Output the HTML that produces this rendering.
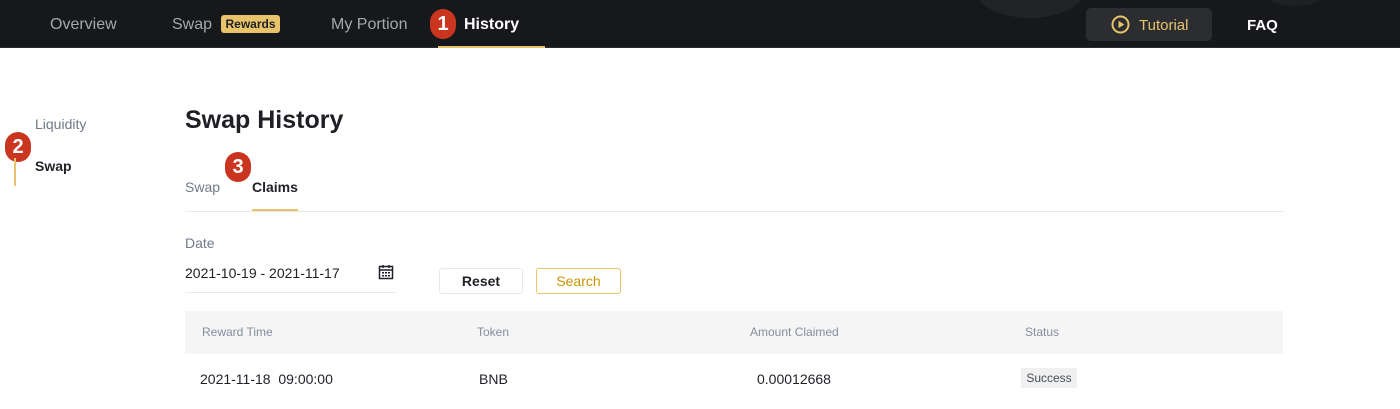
<!DOCTYPE html>
<html><head><meta charset="utf-8"><style>
*{margin:0;padding:0;box-sizing:border-box}
body{width:1400px;height:409px;background:#fff;font-family:"Liberation Sans",sans-serif;position:relative;overflow:hidden;color:#1e2026}
.a{position:absolute;white-space:nowrap}
.hdr{position:absolute;left:0;top:0;width:1400px;height:48px;background:#17181b;border-bottom:1px solid #2a2b2f}
.nav{font-size:16px;color:#a5a8ad;top:16px}
.badge{position:absolute;width:26px;height:30px;border-radius:13px;background:#c9351f;color:#fff;font-size:20px;font-weight:bold;text-align:center;line-height:30px}
</style></head><body>
<div class="hdr">
<div style="position:absolute;left:975px;top:-40px;width:110px;height:58px;border-radius:50%;background:#222326"></div>
<div style="position:absolute;left:1260px;top:-30px;width:70px;height:36px;border-radius:50%;background:#1f2023"></div>
<div class="a nav" style="left:50px">Overview</div>
<div class="a nav" style="left:172px">Swap</div>
<div class="a" style="left:221px;top:15px;width:59px;height:18px;background:#e8c36a;border-radius:3px;color:#1e2026;font-size:12px;font-weight:bold;text-align:center;line-height:18px">Rewards</div>
<div class="a nav" style="left:331px">My Portion</div>
<div class="badge" style="left:430px;top:9px">1</div>
<div class="a nav" style="left:464px;color:#fff;font-weight:bold">History</div>
<div class="a" style="left:438px;top:46px;width:107px;height:2px;background:#e8c36a"></div>
<div class="a" style="left:1086px;top:8px;width:126px;height:33px;background:#2b2d31;border-radius:5px"></div>
<svg class="a" style="left:1111px;top:15px" width="19" height="19" viewBox="0 0 19 19"><circle cx="9.5" cy="9.5" r="8" fill="none" stroke="#e8c36a" stroke-width="2"/><path d="M7.5 5.8v7.4l5.8-3.7z" fill="#e8c36a"/></svg>
<div class="a" style="left:1139px;top:17px;font-size:15px;color:#e8c36a">Tutorial</div>
<div class="a" style="left:1247px;top:17px;font-size:15px;color:#fff;font-weight:bold">FAQ</div>
</div>
<div class="a" style="left:35px;top:116px;font-size:14px;color:#707a8a">Liquidity</div>
<div class="badge" style="left:5px;top:132px">2</div>
<div class="a" style="left:14px;top:158px;width:2px;height:28px;background:#e8c36a"></div>
<div class="a" style="left:35px;top:158px;font-size:14px;color:#1e2026;font-weight:bold">Swap</div>
<div class="a" style="left:185px;top:106px;font-size:25px;font-weight:bold">Swap History</div>
<div class="a" style="left:185px;top:179px;font-size:14px;color:#707a8a">Swap</div>
<div class="badge" style="left:225px;top:152px">3</div>
<div class="a" style="left:252px;top:179px;font-size:14px;font-weight:bold">Claims</div>
<div class="a" style="left:252px;top:209px;width:46px;height:2px;background:#e8c36a"></div>
<div class="a" style="left:185px;top:211px;width:1098px;height:1px;background:#e6e8ea"></div>
<div class="a" style="left:185px;top:235px;font-size:14px;color:#707a8a">Date</div>
<div class="a" style="left:185px;top:265px;font-size:14px">2021-10-19 - 2021-11-17</div>
<svg class="a" style="left:378px;top:264px" width="16" height="16" viewBox="0 0 16 16"><rect x="1.5" y="2.5" width="13" height="12" fill="none" stroke="#1e2026" stroke-width="1.5"/><path d="M1.5 6h13M5 1v3M11 1v3" stroke="#1e2026" stroke-width="1.5"/><path d="M4 8h2v1.5H4zM7 8h2v1.5H7zM10 8h2v1.5h-2zM4 11h2v1.5H4zM7 11h2v1.5H7zM10 11h2v1.5h-2z" fill="#1e2026"/></svg>
<div class="a" style="left:185px;top:292px;width:211px;height:1px;background:#e6e8ea"></div>
<div class="a" style="left:439px;top:268px;width:84px;height:26px;border:1px solid #e6e8ea;border-radius:3px;font-size:14px;font-weight:bold;text-align:center;line-height:24px">Reset</div>
<div class="a" style="left:536px;top:268px;width:85px;height:26px;border:1px solid #e8c36a;border-radius:3px;font-size:14px;color:#c99400;text-align:center;line-height:24px">Search</div>
<div class="a" style="left:185px;top:311px;width:1098px;height:43px;background:#f5f5f5"></div>
<div class="a" style="left:202px;top:325px;font-size:12px;color:#848e9c">Reward Time</div>
<div class="a" style="left:477px;top:325px;font-size:12px;color:#848e9c">Token</div>
<div class="a" style="left:750px;top:325px;font-size:12px;color:#848e9c">Amount Claimed</div>
<div class="a" style="left:1025px;top:325px;font-size:12px;color:#848e9c">Status</div>
<div class="a" style="left:200px;top:371px;font-size:14px">2021-11-18&nbsp; 09:00:00</div>
<div class="a" style="left:479px;top:371px;font-size:14px">BNB</div>
<div class="a" style="left:757px;top:371px;font-size:14px">0.00012668</div>
<div class="a" style="left:1021px;top:368px;width:56px;height:20px;background:#f0f0f0;font-size:12px;color:#474d57;text-align:center;line-height:20px">Success</div>
</body></html>
